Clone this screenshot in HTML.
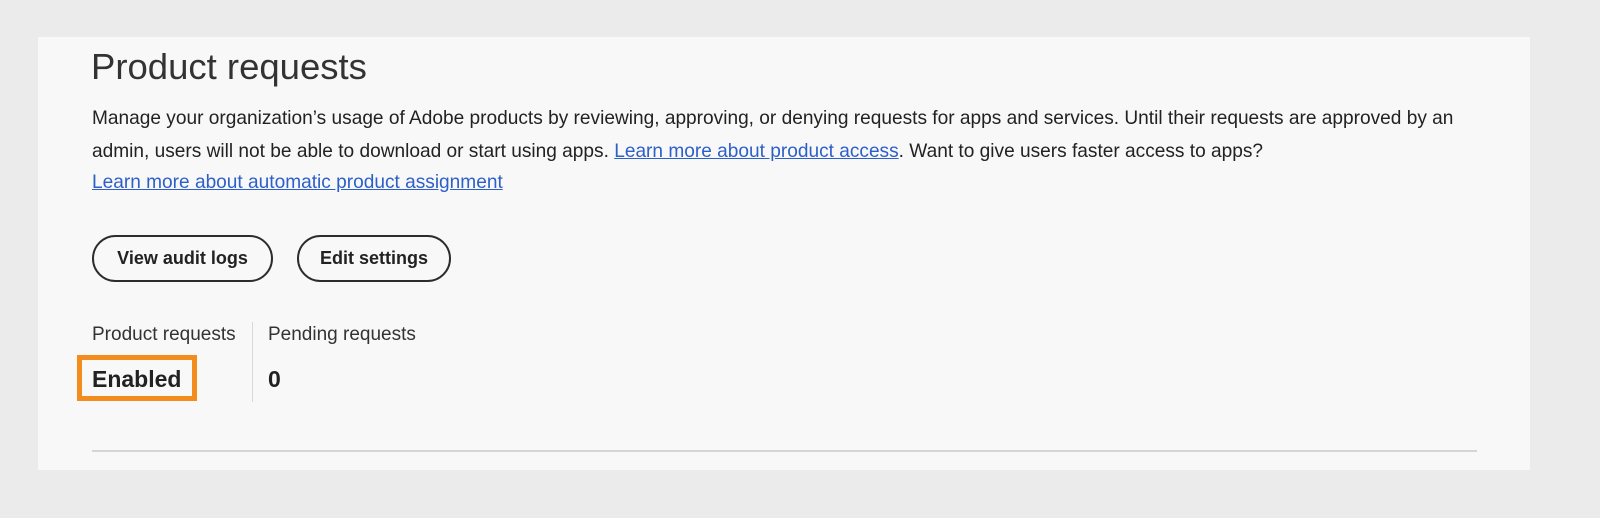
<!DOCTYPE html>
<html><head><meta charset="utf-8"><style>
*{margin:0;padding:0;box-sizing:border-box}
body{width:1600px;height:518px;background:#ebebeb;font-family:"Liberation Sans",sans-serif;color:#222;position:relative;overflow:hidden}
.card{position:absolute;left:38px;top:37px;width:1492px;height:433px;background:#f8f8f8}
.t{position:absolute;left:91px;top:46px;font-size:36.5px;font-weight:300;color:#333;white-space:nowrap}
.p{position:absolute;left:92px;font-size:19.1px;white-space:nowrap;color:#222}
a{color:#2d5fc8;text-decoration:underline}
.b{position:absolute;top:235px;height:47px;border:2px solid #2c2c2c;border-radius:24px;font-size:18px;font-weight:bold;display:flex;align-items:center;justify-content:center;color:#222}
.l{position:absolute;top:324px;font-size:19px;color:#333}
.v{position:absolute;top:366px;font-size:23px;font-weight:bold;color:#222}
</style></head><body>
<div class="card"></div>
<div class="t">Product requests</div>
<div class="p" style="top:108px">Manage your organization’s usage of Adobe products by reviewing, approving, or denying requests for apps and services. Until their requests are approved by an</div>
<div class="p" style="top:141px">admin, users will not be able to download or start using apps. <a>Learn more about product access</a>. Want to give users faster access to apps?</div>
<div class="p" style="top:172px"><a>Learn more about automatic product assignment</a></div>
<div class="b" style="left:92px;width:181px">View audit logs</div>
<div class="b" style="left:297px;width:154px">Edit settings</div>
<div class="l" style="left:92px">Product requests</div>
<div class="l" style="left:268px">Pending requests</div>
<div style="position:absolute;left:252px;top:322px;width:1px;height:80px;background:#d8d8d8"></div>
<div style="position:absolute;left:77px;top:355px;width:120px;height:46px;border:5px solid #f28c1c"></div>
<div class="v" style="left:92px">Enabled</div>
<div class="v" style="left:268px">0</div>
<div style="position:absolute;left:92px;top:450px;width:1385px;height:2px;background:#d5d5d5"></div>
</body></html>
